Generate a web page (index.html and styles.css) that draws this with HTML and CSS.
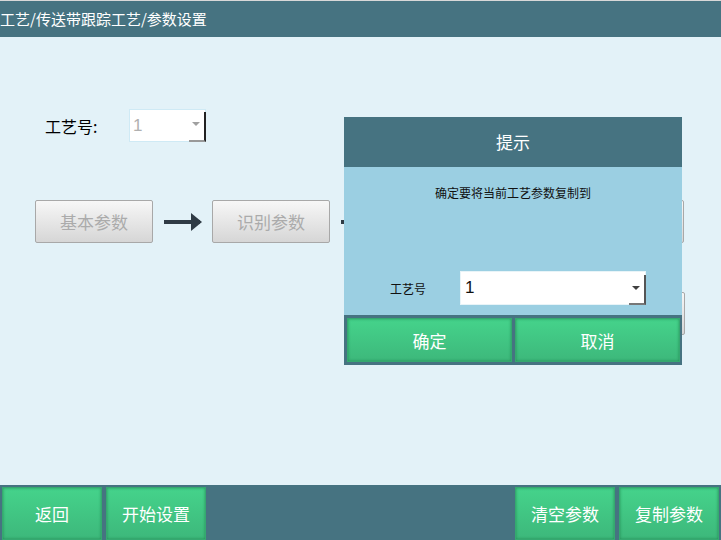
FILE: index.html
```html
<!DOCTYPE html>
<html>
  <head>
    <title>参数设置</title>
    <link rel="stylesheet" href="styles.css">
  </head>
  <body>
    <div class="screen">
      <div class="topbar">工艺/传送带跟踪工艺/参数设置</div>

      <div class="main">
        <div class="form-row">
          <span class="form-label">工艺号:</span>
          <div class="select select-disabled">
            <span class="select-value">1</span>
            <span class="select-arrow"></span>
          </div>
        </div>

        <div class="steps">
          <button class="step-btn">基本参数</button>
          <span class="arrow"></span>
          <button class="step-btn">识别参数</button>
          <span class="arrow"></span>
          <button class="step-btn">跟踪参数</button>
          <span class="arrow"></span>
          <button class="step-btn">位置参数</button>
        </div>
        <div class="steps steps-second">
          <button class="step-btn">其他参数</button>
        </div>

        <div class="dialog">
          <div class="dialog-title">提示</div>
          <div class="dialog-body">
            <p class="dialog-msg">确定要将当前工艺参数复制到</p>
            <div class="dialog-row">
              <span class="dialog-label">工艺号</span>
              <div class="select select-wide">
                <span class="select-value">1</span>
                <span class="select-arrow dark"></span>
              </div>
            </div>
          </div>
          <div class="dialog-actions">
            <button class="green-btn">确定</button>
            <button class="green-btn">取消</button>
          </div>
        </div>
      </div>

      <div class="bottombar">
        <button class="green-btn bar-btn">返回</button>
        <button class="green-btn bar-btn">开始设置</button>
        <div class="spacer"></div>
        <button class="green-btn bar-btn">清空参数</button>
        <button class="green-btn bar-btn">复制参数</button>
      </div>
    </div>
  </body>
</html>
```

FILE: styles.css
```css
body {
  margin: 0;
  padding: 0;
  font-family: "Noto Sans CJK SC", "Liberation Sans", sans-serif;
  background: #e3f2f8;
}

.screen {
  width: 721px;
  height: 540px;
  display: flex;
  flex-direction: column;
  overflow: hidden;
}

.topbar {
  height: 36px;
  line-height: 36px;
  background: #467381;
  border-top: 1px solid #d8d8d8;
  color: #fff;
  font-size: 15px;
  padding-left: 0;
  white-space: nowrap;
}

.main {
  flex: 1;
  position: relative;
  background: #e3f2f8;
}

.form-row {
  display: flex;
  align-items: center;
  padding: 72px 0 0 45px;
}

.form-label {
  font-size: 16px;
  color: #000;
  width: 84px;
}

.select {
  position: relative;
  background: #fff;
  display: flex;
  align-items: center;
  box-sizing: border-box;
}

.select-disabled {
  width: 77px;
  height: 33px;
  border: 1px solid #cfeaf5;
}

.select-disabled .select-value {
  color: #b0b0b0;
  font-size: 17px;
  padding-left: 3px;
}

.select-value {
  font-family: "Liberation Sans", sans-serif;
}

.select-arrow {
  position: absolute;
  right: 5px;
  top: 12px;
  width: 0;
  height: 0;
  border-left: 4px solid transparent;
  border-right: 4px solid transparent;
  border-top: 4px solid #a0a0a0;
}

.select-arrow.dark {
  border-top-color: #404040;
  top: 14px;
}

.select::after {
  content: "";
  position: absolute;
  right: -1px;
  bottom: -1px;
  width: 15px;
  height: 28px;
  border-right: 2px solid #555;
  border-bottom: 2px solid #777;
}

.select-disabled::after {
  border-right-color: #222;
  border-bottom-color: #999;
}

.steps {
  display: flex;
  align-items: center;
  padding: 58px 0 0 35px;
}

.steps-second {
  justify-content: flex-end;
  padding: 49px 36px 0 0;
}

.step-btn {
  width: 118px;
  height: 43px;
  background: linear-gradient(#f7f7f7, #d6d6d6);
  border: 1px solid #a8a8a8;
  border-radius: 2px;
  color: #ababab;
  font-family: inherit;
  font-size: 17px;
  padding: 0;
}

.arrow {
  position: relative;
  width: 36px;
  height: 4px;
  margin: 0 12px 0 11px;
  background: #2f3b45;
}

.arrow::after {
  content: "";
  position: absolute;
  right: -2px;
  top: -7px;
  border-top: 9px solid transparent;
  border-bottom: 9px solid transparent;
  border-left: 11px solid #2f3b45;
}

.dialog {
  position: absolute;
  left: 344px;
  top: 80px;
  width: 338px;
  height: 248px;
  display: flex;
  flex-direction: column;
  background: #467381;
}

.dialog-title {
  height: 50px;
  line-height: 50px;
  text-align: center;
  color: #fff;
  font-size: 17px;
}

.dialog-body {
  flex: 1;
  background: #9bcfe2;
  display: flex;
  flex-direction: column;
}

.dialog-msg {
  margin: 17px 0 0;
  text-align: center;
  font-size: 12px;
  color: #111;
}

.dialog-row {
  display: flex;
  align-items: center;
  margin-top: auto;
  margin-bottom: 10px;
  padding-left: 46px;
}

.dialog-label {
  font-size: 12px;
  color: #111;
  width: 70px;
}

.select-wide {
  width: 186px;
  height: 34px;
  border: 1px solid #e8f4f8;
}

.select-wide .select-value {
  font-size: 17px;
  color: #111;
  padding-left: 4px;
}

.dialog-actions {
  display: flex;
  gap: 3px;
  padding: 3px 2px 3px 3px;
}

.green-btn {
  flex: 1;
  height: 44px;
  background: linear-gradient(#45d38b, #3db87b);
  border: 1px solid #35a870;
  box-shadow: inset 0 0 3px rgba(20, 110, 60, 0.6);
  color: #fff;
  font-family: inherit;
  font-size: 17px;
  padding: 0;
}

.bottombar {
  height: 55px;
  background: #467381;
  display: flex;
  padding: 2px 2px 0 2px;
  gap: 4px;
  box-sizing: border-box;
}

.bar-btn {
  flex: none;
  width: 100px;
  height: 53px;
}

.spacer {
  flex: 1;
}
```
